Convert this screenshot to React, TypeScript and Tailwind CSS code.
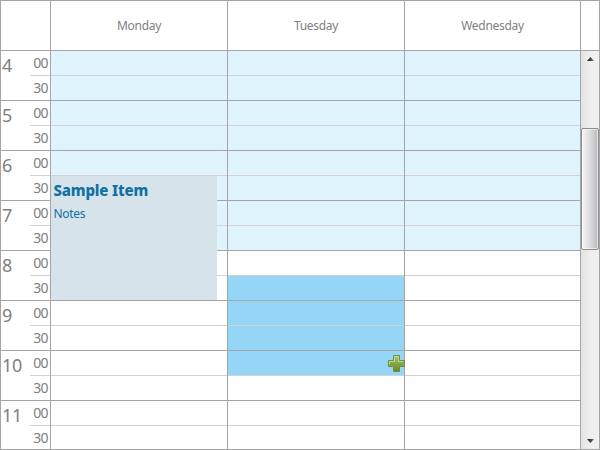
const days = ["Monday", "Tuesday", "Wednesday"];
const hours = [4, 5, 6, 7, 8, 9, 10, 11];

function isSelected(day: string, slot: number) {
  return day === "Tuesday" && slot >= 9 && slot < 13;
}

function slotColor(day: string, slot: number) {
  if (isSelected(day, slot)) return "bg-[#95d5f6]";
  return slot < 8 ? "bg-[#e0f4fd]" : "bg-white";
}

function PlusIcon() {
  return (
    <svg width="17" height="17" viewBox="0 0 17 17" className="absolute right-[-1px] bottom-[3px] z-10">
      <defs>
        <linearGradient id="plus" x1="0" y1="0" x2="0" y2="1">
          <stop offset="0" stopColor="#a9c47a" />
          <stop offset="0.45" stopColor="#8aab48" />
          <stop offset="1" stopColor="#5f8a1c" />
        </linearGradient>
      </defs>
      <path
        d="M5.5.5h6v5h5v6h-5v5h-6v-5h-5v-6h5z"
        fill="url(#plus)"
        stroke="#6f8c4a"
        strokeLinejoin="round"
      />
      <path d="M6.5 6.5v-5h4v5h5M1.5 9.5v-3h5" fill="none" stroke="#cfdfae" strokeOpacity="0.8" />
    </svg>
  );
}

function Header() {
  return (
    <div className="flex h-[50px] shrink-0 border-b border-[#a5a5a5] text-xs tracking-[-0.3px]">
      <div className="w-[50px] border-r border-[#a5a5a5]" />
      {days.map((day) => (
        <div
          key={day}
          className="flex w-[177px] items-center justify-center border-r border-[#a5a5a5] pt-px nth-4:w-[176px]"
        >
          {day}
        </div>
      ))}
    </div>
  );
}

function TimeColumn() {
  return (
    <div className="w-[50px] shrink-0 border-r border-[#a5a5a5]">
      {hours.map((hour) => (
        <div key={hour} className="flex h-[50px] border-b border-[#a5a5a5]">
          <div className="w-[29px] pt-[2px] pl-px text-lg leading-6 tracking-[-0.4px]">{hour}</div>
          <div className="w-5 text-right text-sm leading-6 tracking-[-0.6px]">
            <div className="h-[25px] border-b border-[#d2d2d2] pr-[2px]">00</div>
            <div className="h-6 pr-[2px]">30</div>
          </div>
        </div>
      ))}
    </div>
  );
}

function DayColumn({ day }: { day: string }) {
  return (
    <div className="relative w-[177px] shrink-0 border-r border-[#a5a5a5] nth-4:w-[176px]">
      {Array.from({ length: 16 }, (_, slot) => (
        <div
          key={slot}
          className={`relative h-[25px] border-b ${slot % 2 ? "border-[#a5a5a5]" : "border-[#d2d2d2]"} ${slotColor(day, slot)}`}
        >
          {day === "Tuesday" && slot === 12 && <PlusIcon />}
        </div>
      ))}
      {day === "Monday" && (
        <div className="absolute top-[125px] left-0 h-[124px] w-[166px] bg-[#d7e3eb] pl-[2.5px] text-[#0f70a3]">
          <div className="pt-[2px] text-[15px] leading-6 font-extrabold tracking-[-0.15px]">Sample Item</div>
          <div className="text-xs leading-6 tracking-[-0.3px]">Notes</div>
        </div>
      )}
    </div>
  );
}

function ScrollBar() {
  return (
    <div className="relative flex-1 bg-linear-to-r from-[#e3e3e3] via-[#efefef] to-[#f0f0f0]">
      <svg width="7" height="4" viewBox="0 0 7 4" className="absolute top-[6px] left-[6px]">
        <defs>
          <linearGradient id="arrow" x1="0" y1="0" x2="1" y2="0">
            <stop offset="0" stopColor="#111" />
            <stop offset="1" stopColor="#777" />
          </linearGradient>
        </defs>
        <path d="M3.5 0 7 4H0z" fill="url(#arrow)" />
      </svg>
      <div className="absolute top-[77px] left-0 h-[122px] w-[18px] rounded-[2px] border border-[#8e8e8e] bg-linear-to-r from-[#f6f6f6] via-[#dcdce0] to-[#b9b9be] shadow-[inset_0_0_0_1px_#ffffff90]" />
      <svg width="7" height="4" viewBox="0 0 7 4" className="absolute bottom-[6px] left-[6px]">
        <path d="M0 0h7L3.5 4z" fill="url(#arrow)" />
      </svg>
    </div>
  );
}

export default function App() {
  return (
    <div className="flex h-[450px] w-[600px] flex-col overflow-hidden border border-[#a5a5a5] bg-white font-['Noto_Sans',sans-serif] text-[#808080]">
      <Header />
      <div className="flex h-[398px] overflow-hidden">
        <TimeColumn />
        {days.map((day) => (
          <DayColumn key={day} day={day} />
        ))}
        <ScrollBar />
      </div>
    </div>
  );
}
